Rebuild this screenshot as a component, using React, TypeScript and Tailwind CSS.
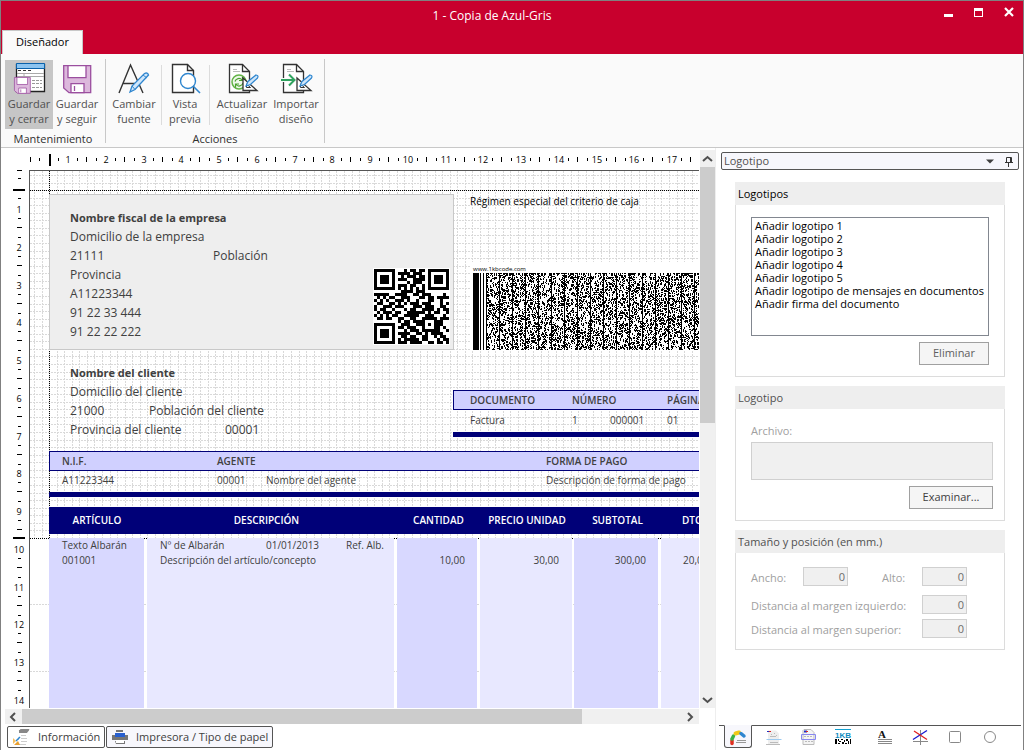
import { useEffect, useRef, useState } from "react";

const RIBBON_GROUPS = [
  {
    title: "Mantenimiento",
    tools: [
      { id: "save-close", lines: ["Guardar", "y cerrar"], width: "w-12", active: true, divider: false },
      { id: "save", lines: ["Guardar", "y seguir"], width: "w-12", active: false, divider: false },
    ],
  },
  {
    title: "Acciones",
    tools: [
      { id: "font", lines: ["Cambiar", "fuente"], width: "w-12", active: false, divider: true },
      { id: "preview", lines: ["Vista", "previa"], width: "w-[42px]", active: false, divider: true },
      { id: "refresh", lines: ["Actualizar", "diseño"], width: "w-[60px]", active: false, divider: false },
      { id: "import", lines: ["Importar", "diseño"], width: "w-12", active: false, divider: false },
    ],
  },
];

const LOGOS = [
  "Añadir logotipo 1",
  "Añadir logotipo 2",
  "Añadir logotipo 3",
  "Añadir logotipo 4",
  "Añadir logotipo 5",
  "Añadir logotipo de mensajes en documentos",
  "Añadir firma del documento",
];

const QR_ROWS = [
  "1111111000101101101111111",
  "1000001011110111001000001",
  "1011101001011101101011101",
  "1011101011100111101011101",
  "1011101000010111001011101",
  "1000001011101100101000001",
  "1111111010101010101111111",
  "0000000001111011100000000",
  "1111100111100110111000010",
  "0101011001110001101101111",
  "1010100111010010001100100",
  "0110011010101110111000101",
  "1001110111000111011100110",
  "1011001000101100111101011",
  "0101110110011111101011001",
  "1010101100111110011100010",
  "0110110011001100111110111",
  "0000000010110111100011100",
  "1111111001110011101011100",
  "1000001011011100100011010",
  "1011101000101110111111001",
  "1011101011110011010111100",
  "1011101001101100110010110",
  "1000001010111110110001011",
  "1111111011101111001101101",
];

const qrPath = QR_ROWS.map((row, y) =>
  [...row].map((c, x) => (c === "1" ? `M${x} ${y}h1v1h-1z` : "")).join("")
).join("");

// Dense 1KB code: start bars, then noise split by a solid line every 13px
const buildDensePath = (width: number, height: number) => {
  let seed = 7919;
  let d = `M0 0h6v${height}h-6zM7 0h1v${height}h-1zM10 0h1v${height}h-1z`;
  for (let x = 13; x < width; x++) {
    if ((x - 13) % 13 === 0) {
      d += `M${x} 0h1v${height}h-1z`;
      continue;
    }
    for (let y = 0; y < height; y += 1) {
      seed = (seed * 1103515245 + 12345) % 2147483648;
      const len = 1 + ((seed >> 12) % 3);
      if ((seed >> 16) % 5 < 3) d += `M${x} ${y}h1v${Math.min(len, height - y)}h-1z`;
      y += len;
    }
  }
  return d;
};
const densePath = buildDensePath(400, 77);

const Floppy = () => (
  <g fill="#dcb8dc" stroke="#9b4f9f" strokeWidth="1.3">
    <path d="M.7.7h27v27H6L.7 23z" />
    <path d="M5 .7h18v12H5z" fill="#fff" />
    <path d="M8 27.700v-9h13v9z" fill="#fff" />
    <path d="M11.500 21v5" />
  </g>
);

const Sheet = () => (
  <>
    <path d="M5.500 2.500h13l7 7v21h-20z" fill="#fff" stroke="#333" strokeWidth="1.300" />
    <path d="M18.500 2.500v7h7" fill="none" stroke="#333" strokeWidth="1.300" />
    <path d="M9 7.500h4M9 9.500h7" stroke="#aaa" strokeWidth=".8" />
  </>
);

const DesignMark = () => (
  <>
    <path d="M19 16v12.500h14z" fill="#fff" stroke="#333" strokeWidth="1.300" />
    <path d="M22.500 22v3.500h4z" fill="#fff" stroke="#333" />
    <path d="M22 24l2-4.500 8-6.500q3 .5 1.500 3l-7 6.500z" fill="#cfe6fa" stroke="#2f86cf" strokeWidth="1.200" />
  </>
);

const ToolIcon = ({ id }: { id: string }) => (
  <svg viewBox="0 0 36 32" className="h-8 w-9" fill="none">
    {id === "save-close" && (
      <>
        <path d="M5.500 2.500h28v27h-28z" fill="#fff" stroke="#222" strokeWidth="1.300" />
        <path d="M5.500 1.500h28v5h-28z" fill="#8cc4f0" stroke="#0a62ab" />
        <path d="M7 8.500h3m2 0h3m2 0h3" stroke="#333" />
        <path d="M6 11.500h27M6 14.500h27M13 11v8" stroke="#aaa" />
        <path d="M21 18.500h10M21 21.500h10M21 25.500h10" stroke="#999" strokeDasharray="3 1" />
        <g transform="translate(3 15) scale(.59)">
          <Floppy />
        </g>
      </>
    )}
    {id === "save" && (
      <g transform="translate(4 3)">
        <Floppy />
      </g>
    )}
    {id === "font" && (
      <>
        <path d="M3 31L14.500 3 27 31M7.500 21.500H23" stroke="#333" strokeWidth="1.400" />
        <path d="M14 30l2-6L28.500 11.500q3-1.500 4 1.500L19 27.500z" fill="#cfe6fa" stroke="#2f86cf" strokeWidth="1.300" />
        <path d="M16 24l3 3.500M27 13l4 3" stroke="#2f86cf" />
      </>
    )}
    {id === "preview" && (
      <>
        <path d="M5.500 2.500h15l6 6v22h-21z" fill="#fff" stroke="#333" strokeWidth="1.400" />
        <path d="M20.500 2.500v6h6" stroke="#333" strokeWidth="1.400" />
        <circle cx="21" cy="19" r="7.500" fill="#fff" stroke="#2f86cf" strokeWidth="1.400" />
        <path d="M26.500 24.500l6.500 6.500" stroke="#2f86cf" strokeWidth="1.600" />
      </>
    )}
    {id === "refresh" && (
      <>
        <Sheet />
        <circle cx="15" cy="20" r="7" stroke="#62b346" strokeWidth="1.500" fill="#eef8ea" />
        <path d="M11 19.500a4 4 0 0 1 7-1.500m.5-3v3.500H15M19 21a4 4 0 0 1-7 1.500m-.5 3V22H15" stroke="#4aa12f" strokeWidth="1.200" />
        <DesignMark />
      </>
    )}
    {id === "import" && (
      <>
        <Sheet />
        <path d="M3 18h13M11 12.500l5.500 5.500-5.500 5.500" stroke="#fafafa" strokeWidth="4" />
        <path d="M3 18h13M11 12.500l5.500 5.500-5.500 5.500" stroke="#2fa35f" strokeWidth="2" />
        <DesignMark />
      </>
    )}
  </svg>
);

const CM = 37.75;

// Whole centimetres whose number fits in the ruler's current length
const useCentimetres = (axis: "width" | "height") => {
  const ref = useRef<SVGSVGElement>(null);
  const [count, setCount] = useState(0);

  useEffect(() => {
    if (!ref.current) return;
    const observer = new ResizeObserver(([entry]) => {
      setCount(Math.max(0, Math.floor((entry.contentRect[axis] - 44) / CM) + 1));
    });
    observer.observe(ref.current);
    return () => observer.disconnect();
  }, [axis]);

  return { ref, marks: Array.from({ length: count }, (_, i) => i) };
};

const HorizontalRuler = () => {
  const { ref, marks } = useCentimetres("width");

  return (
    <svg ref={ref} className="block h-5 w-full" fontSize="9" fontFamily="Open Sans, sans-serif" textAnchor="middle" shapeRendering="crispEdges">
      <path d="M0 7h1v5h-1zM9 8h1v3h-1zM28 8h1v3h-1zM19 4h2v12h-2z" />
      {marks.map((i) => {
        const x = Math.round(38 + i * CM);
        return (
          <g key={i}>
            <text x={x} y="13">{i + 1}</text>
            <path d={`M${x + 9} 8h1v3h-1zM${x + 18} 7h1v5h-1zM${x + 28} 8h1v3h-1z`} />
          </g>
        );
      })}
    </svg>
  );
};

const VerticalRuler = () => {
  const { ref, marks } = useCentimetres("height");

  return (
    <svg ref={ref} className="block h-full w-6 shrink-0" fontSize="9" fontFamily="Open Sans, sans-serif" textAnchor="middle" shapeRendering="crispEdges">
      <path d="M12 0h5v1h-5zM13 8h3v1h-3zM8 19h12v2H8zM13 28h3v1h-3zM8 367h12v2H8z" />
      {marks.map((i) => {
        const y = Math.round(39 + i * CM);
        return (
          <g key={i}>
            <text x="14" y={y + 4}>{i + 1}</text>
            <path d={`M13 ${y + 9}h3v1h-3zM12 ${y + 18}h5v1h-5z`} />
            {i !== 8 && <path d={`M13 ${y + 28}h3v1h-3z`} />}
          </g>
        );
      })}
    </svg>
  );
};

const CanvasGrid = () => (
  <svg className="absolute inset-0 h-full w-full" shapeRendering="crispEdges" fill="none">
    <g stroke="#d9d9d9" strokeDasharray="2 1">
      {Array.from({ length: 180 }, (_, i) => Math.round(4 + i * 7.56)).map((x) => (
        <path key={x} d={`M${x}.5 0V367`} />
      ))}
      {Array.from({ length: 48 }, (_, i) => Math.round(4 + i * 7.56)).map((y) => (
        <path key={y} d={`M0 ${y}.5H1400`} />
      ))}
      {[433, 500, 567, 634].map((y) => (
        <path key={y} d={`M0 ${y}.5H1400`} />
      ))}
    </g>
    <path d="M0 19.500H1400M19.500 0V367M0 367.500H1400" stroke="#000" strokeDasharray="1 1" />
  </svg>
);

const DocumentPage = () => (
  <div className="relative min-w-0 flex-1 overflow-hidden border-l border-t border-[#555] bg-white text-[#404040]">
    <CanvasGrid />
    <div className="relative w-[720px] pl-[19px] pt-[23px] text-[10px]">
      <div className="flex">
        <div className="flex h-[156px] w-[405px] justify-between border border-[#c8c8c8] bg-[#eeeeee] pl-5 pr-px pt-[13px] text-xs leading-[19px]">
          <div className="whitespace-nowrap">
            <p className="text-[11px] font-bold leading-[19px]">Nombre fiscal de la empresa</p>
            <p>Domicilio de la empresa</p>
            <p className="flex">
              <span className="w-[143px]">21111</span>
              <span>Población</span>
            </p>
            <p>Provincia</p>
            <p>A11223344</p>
            <p>91 22 33 444</p>
            <p>91 22 22 222</p>
          </div>
          <svg viewBox="-1 -1 27 27" className="mb-[2px] h-[81px] w-[81px] self-end" shapeRendering="crispEdges">
            <path d="M-.3-.3h25.600v25.600h-25.600z" fill="#fff" />
            <path d={qrPath} fill="#000" />
          </svg>
        </div>
        <div className="ml-4 flex flex-1 flex-col justify-between text-black">
          <p className="leading-[14px]">Régimen especial del criterio de caja</p>
          <div className="bg-white pl-[3px] pt-1">
            <p className="text-[6px] leading-[7px]">www.1kbcode.com</p>
            <svg className="block h-[77px] w-full" shapeRendering="crispEdges">
              <path d={densePath} />
            </svg>
          </div>
        </div>
      </div>

      <div className="flex h-[101px]">
        <div className="w-[404px] pl-[21px] pt-[13px] text-xs leading-[19px]">
          <p className="text-[11px] font-bold leading-[19px]">Nombre del cliente</p>
          <p>Domicilio del cliente</p>
          <p className="flex">
            <span className="w-[79px]">21000</span>
            <span>Población del cliente</span>
          </p>
          <p className="flex">
            <span className="w-[155px]">Provincia del cliente</span>
            <span>00001</span>
          </p>
        </div>
        <div className="mt-10 flex-1">
          <div className="flex h-5 items-center border border-[#000078] bg-[#d0d0ff] pl-4 font-semibold">
            <span className="w-[102px]">DOCUMENTO</span>
            <span className="w-[95px]">NÚMERO</span>
            <span>PÁGINA</span>
          </div>
          <div className="flex h-[22px] items-start pl-[17px] pt-px leading-[18px]">
            <span className="w-[102px]">Factura</span>
            <span className="w-[38px]">1</span>
            <span className="w-[57px]">000001</span>
            <span>01</span>
          </div>
          <div className="h-[5px] bg-[#000078]" />
        </div>
      </div>

      <div className="flex h-5 items-center border border-[#000078] bg-[#d0d0ff] pl-3 font-semibold">
        <span className="w-[155px]">N.I.F.</span>
        <span className="w-[329px]">AGENTE</span>
        <span>FORMA DE PAGO</span>
      </div>
      <div className="flex h-[21px] items-start pl-[13px] leading-[18px]">
        <span className="w-[155px]">A11223344</span>
        <span className="w-[49px]">00001</span>
        <span className="w-[280px]">Nombre del agente</span>
        <span>Descripción de forma de pago</span>
      </div>
      <div className="h-[5px] bg-[#000078]" />

      <table className="mt-[10px] w-full table-fixed border-separate border-spacing-0 whitespace-nowrap">
        <colgroup>
          <col className="w-[98px]" />
          <col className="w-[250px]" />
          <col className="w-[83px]" />
          <col className="w-[94px]" />
          <col className="w-[87px]" />
          <col />
        </colgroup>
        <thead>
          <tr className="h-[27px] bg-[#000078] text-white">
            <th className="p-0 pr-[2px] font-semibold">ARTÍCULO</th>
            <th className="p-0 pr-[11px] font-semibold">DESCRIPCIÓN</th>
            <th className="p-0 font-semibold">CANTIDAD</th>
            <th className="p-0 font-semibold">PRECIO UNIDAD</th>
            <th className="p-0 font-semibold">SUBTOTAL</th>
            <th className="p-0 pl-[21px] text-left font-semibold">DTO.</th>
          </tr>
        </thead>
        <tbody className="align-top leading-[15px]">
          <tr className="h-1">
            <td colSpan={6} className="p-0" />
          </tr>
          <tr className="h-[260px]">
            <td className="border-r-[3px] border-transparent bg-[#d8d8ff] bg-clip-padding p-0 pl-[13px]">
              <p>Texto Albarán</p>
              <p>001001</p>
            </td>
            <td className="border-r-[3px] border-transparent bg-[#e8e8ff] bg-clip-padding p-0 pl-[13px]">
              <p className="flex">
                <span className="w-[106px]">Nº de Albarán</span>
                <span className="w-[80px]">01/01/2013</span>
                <span>Ref. Alb.</span>
              </p>
              <p>Descripción del artículo/concepto</p>
            </td>
            <td className="border-r-[3px] border-transparent bg-[#d8d8ff] bg-clip-padding p-0 pr-3 pt-[15px] text-right">10,00</td>
            <td className="border-r-2 border-transparent bg-[#e8e8ff] bg-clip-padding p-0 pr-[13px] pt-[15px] text-right">30,00</td>
            <td className="border-r-[3px] border-transparent bg-[#d8d8ff] bg-clip-padding p-0 pr-3 pt-[15px] text-right">300,00</td>
            <td className="bg-[#e8e8ff] p-0 pl-[22px] pt-[15px]">20,00</td>
          </tr>
        </tbody>
      </table>
    </div>
  </div>
);

const chevrons = {
  up: "M4 10l4.500-4 4.500 4",
  down: "M4 6l4.500 4 4.500-4",
  left: "M10 4L6 8l4 4",
  right: "M6 4l4 4-4 4",
};

const ScrollButton = ({ dir, label }: { dir: keyof typeof chevrons; label: string }) => (
  <button aria-label={label} className="flex h-[17px] w-[17px] shrink-0 items-center justify-center bg-[#f0f0f0]">
    <svg viewBox="0 0 17 16" className="h-4 w-[17px]" fill="none" stroke="#505050" strokeWidth="2">
      <path d={chevrons[dir]} />
    </svg>
  </button>
);

const Panel = ({ title, muted, children }: { title: string; muted?: boolean; children: React.ReactNode }) => (
  <section>
    <h2 className={`h-[23px] bg-[#eeeeee] px-[3px] leading-6 ${muted ? "text-[#505050]" : "text-black"}`}>{title}</h2>
    <div className="border border-t-0 border-[#dcdcdc] px-[15px]">{children}</div>
  </section>
);

const NumberField = ({ id }: { id: string }) => (
  <input
    id={id}
    type="text"
    defaultValue="0"
    disabled
    className="h-[19px] w-[45px] border border-[#d0d0d0] bg-[#f0f0f0] px-[2px] text-right leading-4 text-[#6d6d6d]"
  />
);

const PANES = ["Logotipo", "Página", "Impresión", "Código 1KB", "Texto", "Líneas", "Rectángulo", "Elipse"];

const PaneIcon = ({ index }: { index: number }) => (
  <svg viewBox="0 0 18 18" className="h-[18px] w-[18px]" fill="none">
    {index === 0 && (
      <>
        <path d="M3 12.500v3" stroke="#e03020" strokeWidth="3.500" strokeLinecap="round" />
        <path d="M3 11l1.500-3" stroke="#38b048" strokeWidth="3.500" strokeLinecap="round" />
        <path d="M6.500 5.500l3.500-1" stroke="#f0c818" strokeWidth="4" strokeLinecap="round" />
        <path d="M12 5.500l3 2.500" stroke="#2f86cf" strokeWidth="3.500" strokeLinecap="round" />
        <path d="M8 12.500h9M7 14.500h10" stroke="#999" />
      </>
    )}
    {index === 1 && (
      <>
        <path d="M4 2.500h8l3 3V16H4z" fill="#eeeeee" />
        <path d="M7 6.500h1m2-1h1m1 2h1M6 8.500h6M6 14.500h8M2 16.500h14" stroke="#bbb" />
        <path d="M3 3.500h2" stroke="#2030c0" />
        <path d="M5 3.500h2" stroke="#e02020" />
        <path d="M2.500 11.500h15" stroke="#9ccaf0" />
      </>
    )}
    {index === 2 && (
      <>
        <path d="M5 1.500h7l3 3v12H4v-14z" fill="#f4f4f4" stroke="#bbb" />
        <path d="M5 3.500h3" stroke="#2030c0" strokeWidth="2" />
        <path d="M7 3.500h2" stroke="#e02020" />
        <path d="M2.500 6.500h14v5h-14z" stroke="#8888f0" />
        <path d="M5 8.500h9M6 13.500h8" stroke="#bbb" strokeDasharray="2 1" />
      </>
    )}
    {index === 3 && (
      <>
        <path d="M1 1.500h16" stroke="#12a0d0" />
        <text x="9" y="10" textAnchor="middle" fontSize="8" fontWeight="700" fontFamily="Liberation Sans, sans-serif" fill="#128cc0">1KB</text>
        <path d="M1 11h2v5H1zM4 11h1v2H4zM5 13h2v1H5zM4 15h2v1H4zM7 11h2v1H7zM8 14h2v2H8zM10 12h1v2h-1zM12 11h2v2h-2zM11 15h2v1h-2zM14 13h1v3h-1zM16 11h1v5h-1z" fill="#000" />
      </>
    )}
    {index === 4 && (
      <>
        <text x="6" y="10" textAnchor="middle" fontSize="11" fontWeight="700" fontFamily="Liberation Serif, serif" fill="#111">A</text>
        <path d="M2 11.500h14M2 13.500h14M2 15.500h14" stroke="#888" />
      </>
    )}
    {index === 5 && (
      <>
        <path d="M9.500 2v15M2 13.500h15" stroke="#888" />
        <path d="M2 11.500L16 2.500" stroke="#1818d0" strokeWidth="1.300" />
        <path d="M3 3l13 8.500" stroke="#e02020" strokeWidth="1.300" />
      </>
    )}
    {index === 6 && <rect x="3.500" y="3.500" width="11" height="11" rx="1" stroke="#888" />}
    {index === 7 && <circle cx="9" cy="9" r="5.500" stroke="#888" />}
  </svg>
);

const SidePane = () => {
  const [pane, setPane] = useState(0);

  return (
    <aside className="flex w-[308px] shrink-0 flex-col border-l border-[#eeeeee] pt-1 text-[11px]">
      <div className="ml-[5px] mr-1 flex h-[18px] items-center rounded-[2px] border border-[#555] bg-[#f7f7fc] pl-[2px] pr-1 text-[#505050]">
        <span className="flex-1">Logotipo</span>
        <button aria-label="Elegir panel" className="mr-[10px] flex">
          <svg viewBox="0 0 8 5" className="h-[5px] w-2">
            <path d="M0 .500h8l-4 4z" fill="#404040" />
          </svg>
        </button>
        <button aria-label="Fijar panel" className="flex">
          <svg viewBox="0 0 10 11" className="h-[11px] w-[10px]" fill="none" stroke="#333">
            <path d="M2.500 6V1.500h5V6M6.500 1.500V6M1 6.500h8M4.500 7v4" />
          </svg>
        </button>
      </div>

      <div className="ml-[19px] mr-[18px] mt-3 flex flex-col gap-[9px] text-[#a0a0a0]">
        <Panel title="Logotipos">
          <div className="flex flex-col items-end gap-[6px] pb-[11px] pt-3">
            <select
              size={9}
              aria-label="Logotipos"
              className="h-[119px] w-full overflow-hidden border border-[#828790] bg-white px-[1px] text-[11px] text-black"
            >
              {LOGOS.map((name) => (
                <option key={name} className="h-[13px] min-h-0 p-0 px-[2px] leading-[13px]">{name}</option>
              ))}
            </select>
            <button className="h-[23px] w-[70px] border border-[#a0a0a0] bg-[#f5f5f5] text-[#606060]">Eliminar</button>
          </div>
        </Panel>

        <Panel title="Logotipo" muted>
          <div className="-mr-1 flex flex-col pb-[11px] pt-3">
            <label htmlFor="file" className="leading-5">Archivo:</label>
            <input id="file" type="text" disabled className="mt-[1px] h-[38px] border border-[#d0d0d0] bg-[#f0f0f0]" />
            <button className="mt-[6px] h-[23px] w-[84px] self-end border border-[#a0a0a0] bg-[#f5f5f5] text-[#404040]">Examinar...</button>
          </div>
        </Panel>

        <Panel title="Tamaño y posición (en mm.)" muted>
          <div className="pb-[11px] pr-[22px] pt-[13px] leading-4">
            <div className="flex items-center">
              <label htmlFor="w" className="w-[52px] pt-1">Ancho:</label>
              <NumberField id="w" />
              <label htmlFor="h" className="ml-auto w-[40px] pt-1">Alto:</label>
              <NumberField id="h" />
            </div>
            <div className="mt-2 flex items-center justify-between">
              <label htmlFor="left" className="whitespace-nowrap pt-1">Distancia al margen izquierdo:</label>
              <NumberField id="left" />
            </div>
            <div className="mt-1 flex items-center justify-between">
              <label htmlFor="top" className="whitespace-nowrap pt-1">Distancia al margen superior:</label>
              <NumberField id="top" />
            </div>
          </div>
        </Panel>
      </div>

      <div className="ml-[3px] mr-[2px] mt-auto flex h-[25px] border-t border-[#555] pl-[5px]">
        {PANES.map((name, i) => (
          <button
            key={name}
            aria-label={name}
            onClick={() => setPane(i)}
            className={`-mt-px flex h-[23px] w-7 items-center justify-center rounded-b-[3px] border ${
              i === 3 ? "mr-[14px]" : "mr-[7px]"
            } ${pane === i ? "border-[#555] border-t-[#f7f7fc] bg-[#f7f7fc]" : "border-transparent border-t-[#555]"}`}
          >
            <PaneIcon index={i} />
          </button>
        ))}
      </div>
    </aside>
  );
};

export default function App() {
  return (
    <div className="flex h-screen flex-col border-l border-r border-t border-[#808080] bg-white font-['Open_Sans','Noto_Sans',sans-serif] text-[11px] text-black">
      <header className="grid shrink-0 grid-cols-[1fr_auto_1fr] bg-[#c8002d] text-white">
        <div className="flex h-[53px] items-end">
          <button className="ml-px h-6 w-[81px] border border-b-0 border-[#c8c8c8] bg-[#fafafa] text-black">Diseñador</button>
        </div>
        <h1 className="-ml-10 mt-[6px] text-xs leading-[18px]">1 - Copia de Azul-Gris</h1>
        <div className="mr-[9px] mt-[6px] flex justify-end gap-5">
          <button aria-label="Minimizar" className="h-3 w-[10px]">
            <svg viewBox="0 0 10 12" className="h-3 w-[10px]"><path d="M0 7h9v3H0z" fill="#fff" /></svg>
          </button>
          <button aria-label="Maximizar" className="h-3 w-[10px]">
            <svg viewBox="0 0 10 12" className="h-3 w-[10px]"><path d="M0 1h9v9H0zM1 4v5h7V4z" fill="#fff" fillRule="evenodd" /></svg>
          </button>
          <button aria-label="Cerrar" className="h-3 w-[10px]">
            <svg viewBox="0 0 10 12" className="h-3 w-[10px]"><path d="M1 1l8 8M9 1L1 9" stroke="#fff" strokeWidth="2.200" /></svg>
          </button>
        </div>
      </header>

      <nav className="flex h-[94px] shrink-0 border-b border-[#c8c8c8] bg-[#fafafa] pl-1 pt-[5px] text-[#505050]">
        {RIBBON_GROUPS.map((group) => (
          <div key={group.title} className="mr-1 flex h-[84px] flex-col items-center border-r border-[#c8c8c8] pr-1">
            <div className="flex pt-[1px]">
              {group.tools.map((tool) => (
                <div key={tool.id} className="flex items-center">
                  <button
                    className={`flex h-[69px] flex-col items-center whitespace-nowrap pt-[2px] leading-[15px] ${tool.width} ${
                      tool.active ? "bg-[#c6c6c6]" : ""
                    }`}
                  >
                    <ToolIcon id={tool.id} />
                    <span className="mt-[2px]">{tool.lines[0]}</span>
                    <span>{tool.lines[1]}</span>
                  </button>
                  {tool.divider && <span className="ml-[3px] mr-[2px] h-[60px] w-px bg-[#dcdcdc]" />}
                </div>
              ))}
            </div>
            <span className="mt-[2px] leading-[15px] text-[#303030]">{group.title}</span>
          </div>
        ))}
      </nav>

      <main className="flex min-h-0 flex-1">
        <div className="flex min-w-0 flex-1 flex-col pl-1">
          <div className="flex min-h-0 flex-1 pt-[2px]">
            <div className="flex min-w-0 flex-1 flex-col">
              <div className="pl-[25px]">
                <HorizontalRuler />
              </div>
              <div className="flex min-h-0 flex-1">
                <VerticalRuler />
                <DocumentPage />
              </div>
            </div>
            <div className="ml-[1px] flex w-[15px] flex-col items-center overflow-hidden bg-[#f0f0f0]">
              <ScrollButton dir="up" label="Subir" />
              <div className="h-64 w-full bg-[#cccccc]" />
              <div className="flex-1" />
              <ScrollButton dir="down" label="Bajar" />
            </div>
          </div>
          <div className="mr-4 mt-px flex h-[15px] shrink-0 items-center overflow-hidden bg-[#f0f0f0]">
            <ScrollButton dir="left" label="Izquierda" />
            <div className="h-full w-[560px] bg-[#cccccc]" />
            <div className="flex-1" />
            <ScrollButton dir="right" label="Derecha" />
          </div>
          <div className="mb-[2px] mt-[2px] flex shrink-0 gap-[1px] pl-[2px] text-[#404040]">
            <button className="flex h-[22px] w-[98px] items-center gap-2 whitespace-nowrap rounded-[2px] border border-[#555] bg-white pl-1">
              <svg viewBox="0 0 18 18" className="h-[18px] w-[18px] shrink-0" fill="none">
                <path d="M7 3q1-2 3-1.500h7l-2 3H8L7 12" fill="#888" stroke="#888" />
                <path d="M7 5v12h9V5z" fill="#fff" />
                <path d="M9 7.500h5M9 10.500h6M9 13.500h6M7 16.500h7" stroke="#ccc" />
                <path d="M1 10l3 3-3 3z" fill="#f5c060" />
                <path d="M2 17l4-4 2 4z" fill="#e8a030" />
                <path d="M4 13l4-4" stroke="#2f86cf" strokeWidth="1.500" />
              </svg>
              Información
            </button>
            <button className="flex h-[22px] w-[167px] items-center gap-2 whitespace-nowrap rounded-[2px] border border-[#555] bg-[#f7f7fc] pl-[5px]">
              <svg viewBox="0 0 16 16" className="h-4 w-4 shrink-0">
                <path d="M4 1h7v2H4zM0 6h3V4h10v2h3v5H0zM3 12h10v3H4z" fill="#777" />
                <path d="M3 4h10v4H3z" fill="#2860d0" />
                <path d="M4 11h8v3H4z" fill="#fff" />
              </svg>
              Impresora / Tipo de papel
            </button>
          </div>
        </div>
        <SidePane />
      </main>
    </div>
  );
}
